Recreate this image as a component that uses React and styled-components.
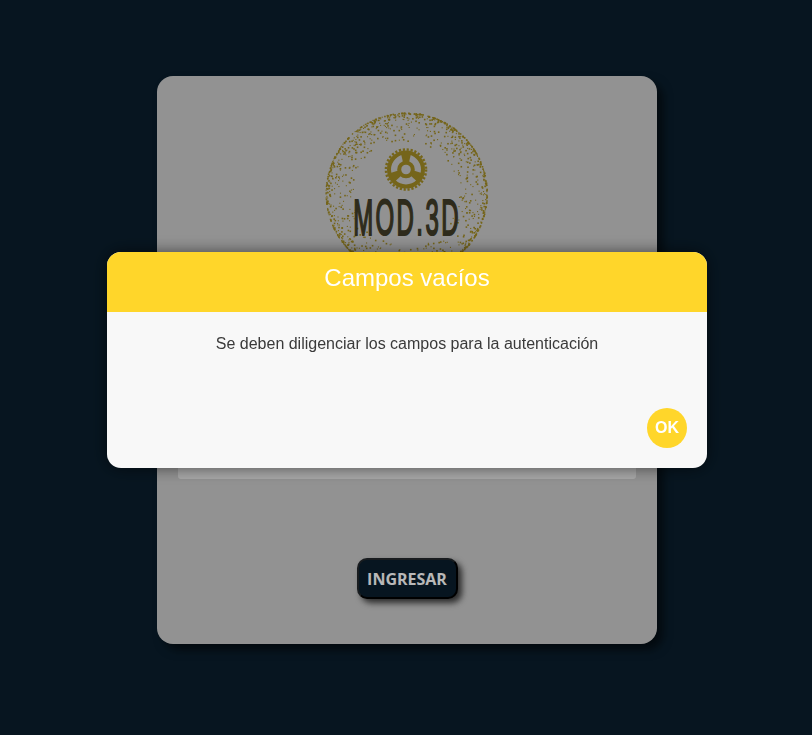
import React from 'react'
import styled, { createGlobalStyle } from 'styled-components'

const GlobalStyle = createGlobalStyle`
    html, body {
        margin: 0;
        padding: 0;
        background: #0a1e2d;
    }
`;

// speckled ring of the logo, seeded so it draws the same every time
function makeDots() {
    let seed = 7;
    const rand = () => {
        seed = (seed * 16807) % 2147483647;
        return seed / 2147483647;
    };
    const dots = [];
    while (dots.length < 1300) {
        const angle = rand() * Math.PI * 2;
        const depth = Math.pow(rand(), 3.4) * 28;
        const size = rand() > 0.5 ? 1.6 : 1.1;
        dots.push({
            x: 81 + Math.cos(angle) * (80.5 - depth),
            y: 83 + Math.sin(angle) * (80.5 - depth),
            size: size,
        });
    }
    return dots;
}

const dots = makeDots();
const spoke = "M-3 -7 L3 -7 L5 -16 L-5 -16 Z";

function Logo() {
    return (
        <LogoSvg viewBox="0 0 164 166" width="164" height="166">
            <g fill="#a28c25">
                {dots.map((dot, index) => {
                    return <rect key={index} x={dot.x} y={dot.y} width={dot.size} height={dot.size} />
                })}
            </g>
            <g transform="translate(81 59.5)">
                <g fill="none" stroke="#a28c25">
                    <circle r="20" strokeWidth="2.6" strokeDasharray="2.2 1.73" />
                    <circle r="17" strokeWidth="4" />
                    <circle r="6.8" strokeWidth="4" />
                </g>
                <g fill="#a28c25">
                    <path d={spoke} />
                    <path d={spoke} transform="rotate(120)" />
                    <path d={spoke} transform="rotate(240)" />
                </g>
            </g>
            <LogoText transform="translate(82 125) scale(0.48 1)" textAnchor="middle">MOD.3D</LogoText>
        </LogoSvg>
    )
}

function App() {
    return (
        <Page>
            <GlobalStyle />
            <Card>
                <Logo />
                <Form>
                    <Field />
                    <Field />
                </Form>
                <ButtonRow>
                    <SubmitButton>INGRESAR</SubmitButton>
                </ButtonRow>
            </Card>
            <Overlay>
                <Modal>
                    <ModalHeader>Campos vacíos</ModalHeader>
                    <ModalBody>
                        <Message>Se deben diligenciar los campos para la autenticación</Message>
                        <ModalActions>
                            <OkButton>OK</OkButton>
                        </ModalActions>
                    </ModalBody>
                </Modal>
            </Overlay>
        </Page>
    )
}

export default App;

const Page = styled.div`
    height: 735px;
    box-sizing: border-box;
    padding: 76px 0 0 2px;
    display: flex;
    justify-content: center;
    align-items: flex-start;
    overflow: hidden;
`;

const Card = styled.div`
    width: 500px;
    height: 568px;
    box-sizing: border-box;
    padding: 34px 21px 0;
    background: #cbcbcb;
    border-radius: 16px;
    box-shadow: 6px 6px 10px rgba(0, 0, 0, 0.55);
    display: flex;
    flex-direction: column;
`;

const LogoSvg = styled.svg`
    display: block;
    flex: none;
    align-self: center;
`;

const LogoText = styled.text`
    font-family: "Liberation Sans", Arial, sans-serif;
    font-size: 50px;
    letter-spacing: 5px;
    fill: #413c27;
    stroke: #413c27;
    stroke-width: 2px;
`;

const Form = styled.div`
    margin-top: 100px;
    display: flex;
    flex-direction: column;
    gap: 23px;
`;

const Field = styled.div`
    height: 40px;
    background: #e8e8e8;
    border-radius: 3px;
`;

const ButtonRow = styled.div`
    margin-top: 79px;
    display: flex;
    justify-content: center;
`;

const SubmitButton = styled.button`
    width: 101px;
    height: 41px;
    padding: 0;
    border: 2px solid #000000;
    border-top-color: #23282c;
    border-left-color: #23282c;
    border-radius: 10px;
    background: #0a1e2d;
    color: #ffffff;
    font-family: "Open Sans", "Noto Sans", sans-serif;
    font-size: 16px;
    font-weight: 700;
    box-shadow: 4px 4px 6px rgba(0, 0, 0, 0.7);
`;

const Overlay = styled.div`
    position: fixed;
    inset: 0;
    background: rgba(0, 0, 0, 0.28);
    display: flex;
    justify-content: center;
    align-items: flex-start;
    box-sizing: border-box;
    padding: 252px 0 0 2px;
`;

const Modal = styled.div`
    width: 600px;
    height: 216px;
    border-radius: 14px;
    overflow: hidden;
    background: #f8f8f8;
    box-shadow: 0 0 16px rgba(0, 0, 0, 0.55);
    display: flex;
    flex-direction: column;
    font-family: "Liberation Sans", Arial, sans-serif;
`;

const ModalHeader = styled.div`
    height: 60px;
    flex: none;
    box-sizing: border-box;
    padding-top: 12px;
    background: #ffd62a;
    color: #ffffff;
    font-size: 24px;
    line-height: 28px;
    text-align: center;
`;

const ModalBody = styled.div`
    flex: 1;
    display: flex;
    flex-direction: column;
    padding: 23px 20px 20px;
`;

const Message = styled.p`
    margin: 0;
    color: #3a3a3a;
    font-size: 16px;
    line-height: 18px;
    text-align: center;
`;

const ModalActions = styled.div`
    margin-top: auto;
    display: flex;
    justify-content: flex-end;
`;

const OkButton = styled.button`
    width: 40px;
    height: 40px;
    padding: 0;
    border: none;
    border-radius: 50%;
    background: #ffd62a;
    color: #ffffff;
    font-family: "Liberation Sans", Arial, sans-serif;
    font-size: 16px;
    font-weight: 700;
`;
